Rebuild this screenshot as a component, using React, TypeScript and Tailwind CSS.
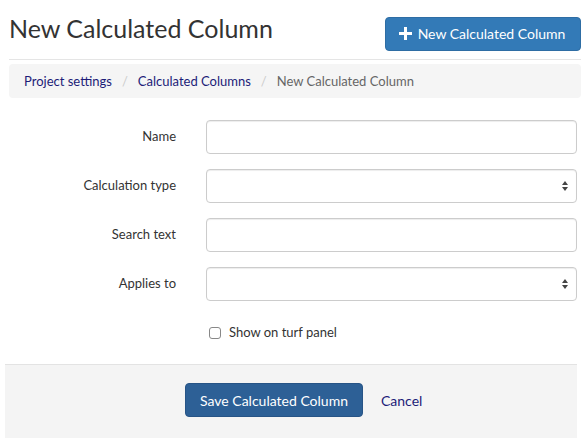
import React from "react";

const SelectArrows = () => (
  <svg width="8" height="12" viewBox="0 0 8 12" className="absolute right-[8px] top-1/2 -translate-y-1/2">
    <path d="M4 1 L7 5 L1 5 Z" fill="#444" />
    <path d="M4 11 L7 7 L1 7 Z" fill="#444" />
  </svg>
);

interface FieldRowProps {
  label: string;
  select?: boolean;
}

const FieldRow = (props: FieldRowProps) => {
  return (
    <div className="flex items-center h-[34px]">
      <div className="w-[176px] text-right text-[13px] text-[#333]">{props.label}</div>
      <div className="relative ml-[30px] w-[371px] h-[34px]">
        <div className="w-full h-full rounded-[4px] border border-[#cccccc] bg-white shadow-[inset_0_1px_1px_rgba(0,0,0,0.075)]" />
        {props.select && <SelectArrows />}
      </div>
    </div>
  );
};

export default function App() {
  return (
    <div className="w-[586px] h-[447px] bg-white overflow-hidden font-['Lato','Noto_Sans',sans-serif] text-[#333]">
      <div className="flex justify-between items-start pl-[9px] pr-[5px] pt-[17px]">
        <h1 className="text-[25px] leading-[26px] -mt-[2px] text-[#333]">New Calculated Column</h1>
        <button className="flex items-center justify-center gap-[6px] w-[196px] h-[34px] rounded-[4px] bg-[#337ab7] border border-[#2e6da4] text-white text-[14px] pr-[2px] pb-[1px]">
          <svg width="13" height="13" viewBox="0 0 13 13">
            <path d="M5 0 H8 V5 H13 V8 H8 V13 H5 V8 H0 V5 H5 Z" fill="white" />
          </svg>
          New Calculated Column
        </button>
      </div>
      <div className="ml-[9px] mr-[5px] mt-[8px] border-t border-[#e5e5e5]" />
      <div className="ml-[9px] mr-[5px] mt-[4px] h-[34px] rounded-[4px] bg-[#f5f5f5] flex items-center px-[15px] pt-[1px] text-[13px]">
        <span className="text-[#1c1c78]">Project settings</span>
        <span className="px-[10px] text-[#cccccc]">/</span>
        <span className="text-[#1c1c78]">Calculated Columns</span>
        <span className="px-[10px] text-[#cccccc]">/</span>
        <span className="text-[#666]">New Calculated Column</span>
      </div>
      <div className="mt-[22px] flex flex-col gap-[15px]">
        <FieldRow label="Name" />
        <FieldRow label="Calculation type" select />
        <FieldRow label="Search text" />
        <FieldRow label="Applies to" select />
      </div>
      <div className="flex items-center mt-[25px] ml-[209px] h-[13px]">
        <div className="w-[12px] h-[12px] rounded-[3px] border border-[#888] bg-white" />
        <span className="ml-[8px] text-[13px] text-[#333]">Show on turf panel</span>
      </div>
      <div className="mt-[25px] ml-[5px] w-[572px] h-[74px] bg-[#f4f4f4] border-t border-[#e3e3e3] flex items-start pt-[18px] pl-[180px]">
        <button className="w-[178px] h-[34px] rounded-[4px] bg-[#2d6096] border border-[#275486] text-white text-[14px]">
          Save Calculated Column
        </button>
        <span className="ml-[18px] mt-[7px] text-[14px] text-[#1c1c78]">Cancel</span>
      </div>
    </div>
  );
}
